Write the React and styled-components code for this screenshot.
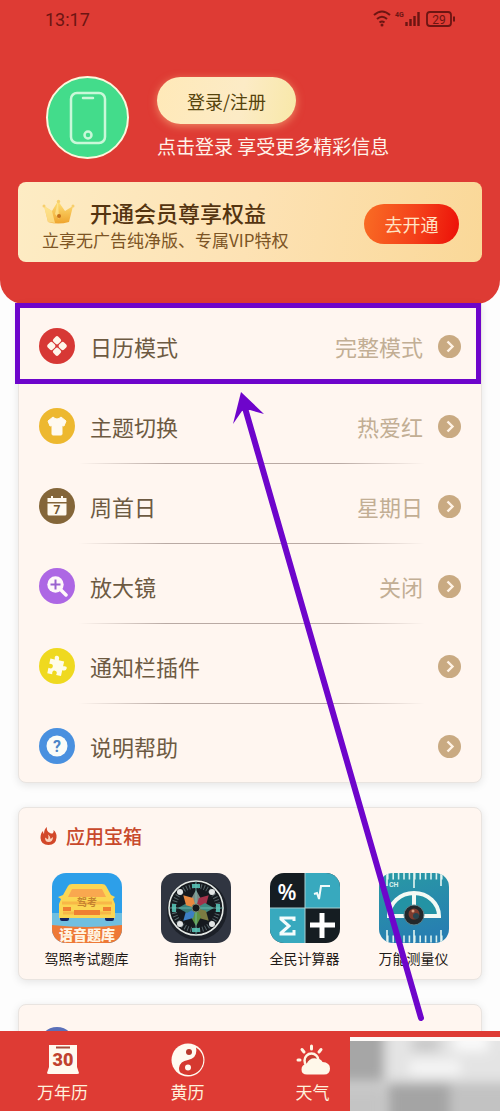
import React from 'react';
import styled, { createGlobalStyle } from 'styled-components';

const GlobalStyle = createGlobalStyle`
  * {
    box-sizing: border-box;
  }
  body {
    margin: 0;
    background: #fdfdfd;
    font-family: 'Noto Sans CJK SC', sans-serif;
  }
  button {
    border: 0;
    padding: 0;
    font-family: inherit;
    cursor: pointer;
  }
`;

const Page = styled.div`
  display: flex;
  flex-direction: column;
  height: 100vh;
  overflow: hidden;
`;

const Content = styled.main`
  position: relative;
  flex: 1;
  min-height: 0;
  overflow-y: auto;
  scrollbar-width: none;
`;

const Header = styled.header`
  height: 304px;
  padding: 0 18px;
  border-radius: 0 0 24px 24px;
  background: #de3b34;
`;

const StatusBar = styled.div`
  display: flex;
  align-items: center;
  justify-content: space-between;
  height: 38px;
  padding: 0 27px;
  color: #6d1512;
  font-family: Roboto, sans-serif;
  font-size: 18px;
`;

const Profile = styled.div`
  display: flex;
  gap: 28px;
  height: 144px;
  padding: 38px 0 0 28px;
`;

const Avatar = styled.div`
  display: grid;
  place-items: center;
  width: 83px;
  height: 83px;
  border: 2px solid #fdf6dc;
  border-radius: 50%;
  background: #43dc8b;
`;

const LoginButton = styled.button`
  display: block;
  width: 139px;
  height: 47px;
  margin: 1px 0 8px;
  border-radius: 24px;
  background: linear-gradient(100deg, #ffe9b8, #fcebc6 60%, #f8e8a8);
  box-shadow: 0 2px 8px rgba(255, 214, 150, 0.5);
  color: #55430c;
  font-size: 18px;
`;

const LoginHint = styled.div`
  color: #fff3ea;
  font-size: 19px;
  line-height: 28px;
`;

const VipCard = styled.section`
  display: flex;
  align-items: center;
  justify-content: space-between;
  height: 80px;
  padding: 0 23px 0 24px;
  border-radius: 8px;
  background: linear-gradient(100deg, #fdecc4, #fde2b4 50%, #fad898);
`;

const VipInfo = styled.div`
  padding-top: 6px;
`;

const VipTitle = styled.h2`
  display: flex;
  align-items: center;
  gap: 15px;
  margin: 0;
  color: #543410;
  font-size: 22px;
  font-weight: 500;
  line-height: 30px;
`;

const VipText = styled.p`
  margin: 0;
  color: #7c5424;
  font-size: 17px;
  line-height: 26px;
`;

const VipButton = styled.button`
  width: 95px;
  height: 40px;
  margin-top: 4px;
  border-radius: 20px;
  background: linear-gradient(100deg, #f96d24, #f4401a 55%, #ec0f08);
  color: #ffe3c4;
  font-size: 18px;
`;

const Card = styled.section`
  margin: 0 18px 24px;
  border: 1px solid #e9e4e0;
  border-radius: ${({ $flatTop }) => ($flatTop ? '0 0 8px 8px' : '8px')};
  background: #fff6f0;
  box-shadow: 0 2px 8px rgba(0, 0, 0, 0.1);
`;

const SettingList = styled.ul`
  margin: 0;
  padding: 13px 20px 8px;
  list-style: none;
`;

const SettingItem = styled.li`
  position: relative;
`;

const SettingButton = styled.button`
  display: flex;
  align-items: center;
  width: 100%;
  height: 56px;
  background: none;
  text-align: left;
`;

const SettingIcon = styled.span`
  display: grid;
  place-items: center;
  width: 36px;
  height: 36px;
  margin-right: 15px;
  border-radius: 50%;
  background: ${({ $color }) => $color};
`;

const SettingLabel = styled.span`
  flex: 1;
  color: #6d5a42;
  font-size: 22px;
`;

const SettingValue = styled.span`
  margin-right: 15px;
  color: #c2ae94;
  font-size: 22px;
`;

const Divider = styled.div`
  height: 1px;
  margin: 9px 36px 14px 40px;
  background: linear-gradient(90deg, transparent, #b9aaa4 25%, #b9aaa4 75%, transparent);
`;

const Highlight = styled.div`
  position: absolute;
  inset: -15px -20px 0 -24px;
  border: 5px solid #6e05cb;
  pointer-events: none;
`;

const Pointer = styled.svg`
  position: absolute;
  top: 388px;
  left: 230px;
  pointer-events: none;
`;

const ToolTitle = styled.h2`
  display: flex;
  align-items: center;
  gap: 8px;
  margin: 0;
  padding: 14px 20px 0;
  color: #c8492c;
  font-size: 19px;
  font-weight: 500;
  line-height: 28px;
`;

const ToolGrid = styled.div`
  display: grid;
  grid-template-columns: repeat(4, 1fr);
  padding: 23px 13px 10px;
`;

const Tool = styled.a`
  display: flex;
  flex-direction: column;
  align-items: center;
  gap: 4px;
  color: #1f1a17;
  font-size: 14px;
  line-height: 22px;
  text-decoration: none;
`;

const ToolSvg = styled.svg`
  display: block;
  border-radius: 14px;
`;

const MoreCard = styled(Card)`
  padding: 22px 20px;
`;

const MoreDot = styled.div`
  width: 36px;
  height: 36px;
  border-radius: 50%;
  background: #5a6fb8;
`;

const TabBar = styled.nav`
  position: relative;
  display: grid;
  grid-template-columns: repeat(4, 1fr);
  height: 80px;
  background: #de3b34;
`;

const Tab = styled.a`
  display: flex;
  flex-direction: column;
  align-items: center;
  gap: 2px;
  padding-top: 12px;
  color: #fff1dc;
  font-size: 17px;
  line-height: 26px;
  text-decoration: none;
`;

const Smudge = styled.svg`
  position: absolute;
  right: 0;
  bottom: 0;
  width: 30%;
  height: 74px;
`;

const StatusIcons = () => (
  <svg width="82" height="20" viewBox="0 0 82 20" fill="none" stroke="#6d1512">
    <path d="M1 6q8-7 16 0M4 10q5-4.500 10 0M6.500 13.500q2.500-2 5 0" strokeWidth="2" />
    <circle cx="9" cy="16" r="1.500" fill="#6d1512" stroke="none" />
    <text x="22" y="8" fill="#6d1512" stroke="none" fontFamily="Roboto" fontSize="7" fontWeight="700">4G</text>
    <path d="M33.500 17v-4M37.500 17v-7M41.500 17V7M45.500 17V3" strokeWidth="2.400" />
    <rect x="54" y="3" width="24" height="14" rx="3" strokeWidth="1.800" />
    <path d="M81 7.500v5" strokeWidth="2" />
    <text x="66" y="14.500" fill="#6d1512" stroke="none" fontFamily="Roboto" fontSize="12" textAnchor="middle">29</text>
  </svg>
);

const PhoneIcon = () => (
  <svg width="38" height="54" viewBox="0 0 38 54" fill="none" stroke="#c9f8d9" strokeWidth="2.500">
    <rect x="2" y="2" width="34" height="50" rx="6" />
    <path d="M14 7h10" strokeLinecap="round" />
    <circle cx="19" cy="44" r="3.500" />
  </svg>
);

const CrownIcon = () => (
  <svg width="33" height="26" viewBox="0 0 33 26">
    <defs>
      <linearGradient id="crown" x1="0" y1="0" x2="0" y2="1">
        <stop offset="0" stopColor="#ffe27a" />
        <stop offset="1" stopColor="#efa42d" />
      </linearGradient>
    </defs>
    <path d="M2 7l8 5 6-10 7 10 8-5-4 16q-11 3-21 0z" fill="url(#crown)" />
    <path d="M2 7l8 5 3 12-7-1zM16 2l-3 13 4 5z" fill="#ffe99b" opacity="0.7" />
    <circle cx="2" cy="7" r="1.500" fill="#f7cf6c" />
    <circle cx="31" cy="7" r="1.500" fill="#f7cf6c" />
    <circle cx="16.500" cy="2.500" r="1.700" fill="#f7cf6c" />
    <circle cx="17" cy="17" r="2" fill="#c4701b" />
  </svg>
);

const ArrowIcon = () => (
  <svg width="23" height="23" viewBox="0 0 23 23">
    <circle cx="11.500" cy="11.500" r="11.500" fill="#c9aa82" />
    <path d="M9.500 6.500l5 5-5 5" fill="none" stroke="#fff3e6" strokeWidth="2.400" />
  </svg>
);

const ModeIcon = () => (
  <svg width="22" height="22" viewBox="0 0 22 22" fill="#fff6ea">
    {[[11, 5.3], [5.3, 11], [16.7, 11], [11, 16.7]].map(([x, y]) => (
      <rect key={`${x}-${y}`} x={x - 3.5} y={y - 3.5} width="7" height="7" rx="2" transform={`rotate(45 ${x} ${y})`} />
    ))}
  </svg>
);

const ShirtIcon = () => (
  <svg width="22" height="22" viewBox="0 0 22 22" fill="#fffaf0">
    <path d="M7 2q4 4 8 0l5 4-2 5-2-.500V19q0 1-1 1H7q-1 0-1-1v-8.500L4 11 2 6z" stroke="#fffaf0" strokeLinejoin="round" />
  </svg>
);

const WeekIcon = () => (
  <svg width="22" height="22" viewBox="0 0 22 22">
    <path d="M1.500 3H5V1h2v2h8V1h2v2h3.500v4h-19zM1.500 8.500h19V19q0 1.500-1.500 1.500H3Q1.500 20.500 1.500 19z" fill="#fffaf0" />
    <text x="11" y="18.500" fill="#73582f" fontFamily="Roboto" fontSize="12" fontWeight="700" textAnchor="middle">7</text>
  </svg>
);

const MagnifierIcon = () => (
  <svg width="22" height="22" viewBox="0 0 22 22">
    <path d="M15 15l5 5" stroke="#fff8fa" strokeWidth="3.500" strokeLinecap="round" />
    <circle cx="9.500" cy="9.500" r="8.200" fill="#fff8fa" />
    <path d="M9.500 4.500v10M4.500 9.500h10" stroke="#9a62cf" strokeWidth="2" />
  </svg>
);

const PuzzleIcon = () => (
  <svg width="22" height="22" viewBox="0 0 22 22">
    <path
      d="M3 5h4.500Q6 1 9 1t2.500 4H17v5q4-1.500 4 1.500T17 14v6h-5q1-4-2-4t-2 4H3v-5.500q4 1 4-2t-4-2z"
      fill="#fffce8"
      transform="rotate(12 11 11)"
    />
  </svg>
);

const HelpIcon = () => (
  <svg width="22" height="22" viewBox="0 0 22 22">
    <circle cx="11" cy="11" r="10.500" fill="#fafcf8" />
    <text x="11" y="16.500" fill="#4a86c8" fontFamily="Roboto" fontSize="16" fontWeight="700" textAnchor="middle">?</text>
  </svg>
);

const FlameIcon = () => (
  <svg width="19" height="20" viewBox="0 0 19 20">
    <path d="M8 1q-1 4 3 6 2 1 3 0 1-1 .500-3Q18 7 17.500 11.500 17 19 9.500 19 2 19 1.500 12 1.500 7 4 5q0 2 1 3Q5 3 8 1z" fill="#d2482a" />
    <path d="M9 8.500q1 3 0 5L6 11.500q0 4.500 3.500 4.500 4.500 0 4.500-5l-2.500 2Q11.500 10 9 8.500z" fill="#fbd3bd" />
  </svg>
);

const CarTool = () => (
  <ToolSvg width="70" height="70" viewBox="0 0 70 70">
    <rect width="70" height="70" fill="#2d9fe9" />
    <path d="M0 40h70v20H0z" fill="#70bfe0" />
    <rect x="8" y="38" width="9" height="10" rx="2" fill="#15245e" />
    <rect x="53" y="38" width="9" height="10" rx="2" fill="#15245e" />
    <path d="M6 24l5-2 5-9q1-2 4-2h30q3 0 4 2l5 9 4 2-2 2 2 5v14H7V31l2-5z" fill="#fbd653" />
    <path d="M20 16h30l4 8H16z" fill="#f9a84f" />
    <path d="M10 30h50M11 40h48" stroke="#f8b847" strokeWidth="3" />
    <path d="M11 34h8v4h-8zM51 34h8v4h-8zM22 37h26v5H22z" fill="#ef7f31" />
    <text x="35" y="33" fill="#c5822f" fontSize="10" fontWeight="700" textAnchor="middle">驾考</text>
    <path d="M0 52q35 4 70 0v18H0z" fill="#ee7936" />
    <text x="35" y="67" fill="#fff5e4" fontSize="14" fontWeight="900" textAnchor="middle">语音题库</text>
  </ToolSvg>
);

const CompassTool = () => (
  <ToolSvg width="70" height="70" viewBox="0 0 70 70">
    <rect width="70" height="70" fill="#303541" />
    <circle cx="36" cy="37" r="30" fill="#1c2028" />
    <circle cx="35" cy="35" r="27" fill="#15191e" stroke="#e4e8e5" strokeWidth="1.600" />
    <circle cx="35" cy="35" r="22" fill="none" stroke="#56656a" strokeWidth="5" strokeDasharray="1 2" />
    {['#7c8c86', '#a3324a', '#3f8a80', '#7c7c42', '#5d9344', '#3d7fc4', '#3a7f7a', '#e8883f'].map((color, i) => (
      <path key={color} d="M35 35l-5-9 5-9 5 9z" fill={color} transform={`rotate(${i * 45} 35 35)`} />
    ))}
    {[[19, 19], [51, 19], [19, 51], [51, 51]].map(([x, y]) => (
      <circle key={`${x}-${y}`} cx={x} cy={y} r="3" fill="#e2e5e5" />
    ))}
    <path d="M31 13h8M31 57h8M13 31v8M57 31v8" stroke="#4fb1a6" strokeWidth="4" />
    <path d="M35 8v54M8 35h54" stroke="#79c9be" strokeWidth="0.700" />
    <circle cx="35" cy="35" r="4" fill="#14181b" stroke="#76856b" />
  </ToolSvg>
);

const CalculatorTool = () => (
  <ToolSvg width="70" height="70" viewBox="0 0 70 70">
    <rect width="70" height="70" fill="#151d22" />
    <path d="M35 0h35v35H35zM0 35h35v35H0z" fill="#38a9be" />
    <path d="M35 0v70M0 35h70" stroke="#a8cfd1" />
    <text x="17" y="27" fill="#fff" fontFamily="Open Sans" fontSize="22" fontWeight="600" textAnchor="middle">%</text>
    <path d="M44 21l3-1 2 6 2-13h9" fill="none" stroke="#f0fafa" strokeWidth="2" />
    <path d="M24 48v-3H11v1l8 7-8 7v1h13v-4" fill="none" stroke="#f4fcfc" strokeWidth="3" />
    <path d="M52 40v25M40 52h25" stroke="#fff" strokeWidth="5" />
  </ToolSvg>
);

const MeasureTool = () => (
  <ToolSvg width="70" height="70" viewBox="0 0 70 70">
    <defs>
      <linearGradient id="measure" x1="0" y1="0" x2="0.300" y2="1">
        <stop offset="0" stopColor="#299aa4" />
        <stop offset="1" stopColor="#277fb1" />
      </linearGradient>
    </defs>
    <rect width="70" height="70" fill="url(#measure)" />
    <path d="M8 3h56M8 66h56" stroke="#d8f1ef" strokeWidth="7" strokeDasharray="1.600 3.800" />
    <path d="M8 0v13M35 0v15M62 0v13M8 70V57M35 70V57M62 70V57" stroke="#e4f5f2" strokeWidth="1.600" />
    <text x="10" y="14" fill="#d5efec" fontFamily="Roboto" fontSize="7" fontWeight="700">CH</text>
    <path d="M10 43a25 23 0 0 1 50 0z" fill="#2393a4" stroke="#f3faf4" strokeWidth="4" />
    <path d="M35 20v12" stroke="#f3faf4" strokeWidth="4" />
    <circle cx="35" cy="42" r="10" fill="#23282b" stroke="#5a7f88" />
    <circle cx="35" cy="41" r="5.500" fill="#7e3c2f" />
    <circle cx="37" cy="43" r="3" fill="#284550" />
    <circle cx="34" cy="38" r="1.500" fill="#d99a7b" />
  </ToolSvg>
);

const CalendarTabIcon = () => (
  <svg width="34" height="34" viewBox="0 0 34 34">
    <path d="M3 2h28v22l2 6q0 1-2 1H3q-2 0-2-1l2-6z" fill="#fffaf0" />
    <path d="M10 4.500h14" stroke="#a54a3b" strokeWidth="2" />
    <text x="17" y="23" fill="#c0422f" fontFamily="Roboto" fontSize="18" fontWeight="900" textAnchor="middle">30</text>
  </svg>
);

const TaijiTabIcon = () => (
  <svg width="34" height="34" viewBox="0 0 34 34">
    <circle cx="17" cy="17" r="16.500" fill="#fffaf0" />
    <path d="M25 4.500A14.500 14.500 0 0 1 10 30q-2-1-2-5 1-7 9-8 10-2 8-12.500z" fill="#d5392f" />
    <circle cx="18" cy="9" r="3" fill="#b8392c" />
    <circle cx="17" cy="24.500" r="3" fill="#fffaf0" />
  </svg>
);

const WeatherTabIcon = () => (
  <svg width="34" height="34" viewBox="0 0 34 34">
    <path d="M15.500 3v3M6 6.500l2 2.500M25 6.500L23 9M2 17h2" stroke="#fff6e4" strokeWidth="3" strokeLinecap="round" />
    <circle cx="15.500" cy="17.500" r="7" fill="#c63e31" stroke="#fff6e4" strokeWidth="2.500" />
    <path d="M11 31.500q-5.500 0-5.500-5 0-5 5-5.500 3-6.500 9.500-5.500 5 0 6.500 3.500 7.500.500 7.500 6.500 0 6-6 6z" fill="#fff8ea" />
  </svg>
);

const settings = [
  { label: '日历模式', value: '完整模式', color: '#d73835', Icon: ModeIcon },
  { label: '主题切换', value: '热爱红', color: '#edb82f', Icon: ShirtIcon },
  { label: '周首日', value: '星期日', color: '#846639', Icon: WeekIcon },
  { label: '放大镜', value: '关闭', color: '#ad67e4', Icon: MagnifierIcon },
  { label: '通知栏插件', value: '', color: '#efd91f', Icon: PuzzleIcon },
  { label: '说明帮助', value: '', color: '#4990df', Icon: HelpIcon }
];

const tools = [
  { name: '驾照考试题库', Icon: CarTool },
  { name: '指南针', Icon: CompassTool },
  { name: '全民计算器', Icon: CalculatorTool },
  { name: '万能测量仪', Icon: MeasureTool }
];

const tabs = [
  { name: '万年历', Icon: CalendarTabIcon },
  { name: '黄历', Icon: TaijiTabIcon },
  { name: '天气', Icon: WeatherTabIcon }
];

const App = () => (
  <Page>
    <GlobalStyle />
    <Content>
      <Header>
        <StatusBar>
          <span>13:17</span>
          <StatusIcons />
        </StatusBar>
        <Profile>
          <Avatar>
            <PhoneIcon />
          </Avatar>
          <div>
            <LoginButton>登录/注册</LoginButton>
            <LoginHint>点击登录 享受更多精彩信息</LoginHint>
          </div>
        </Profile>
        <VipCard>
          <VipInfo>
            <VipTitle>
              <CrownIcon />
              开通会员尊享权益
            </VipTitle>
            <VipText>立享无广告纯净版、专属VIP特权</VipText>
          </VipInfo>
          <VipButton>去开通</VipButton>
        </VipCard>
      </Header>

      <Card $flatTop>
        <SettingList>
          {settings.map(({ label, value, color, Icon }, index) => (
            <SettingItem key={label}>
              <SettingButton>
                <SettingIcon $color={color}>
                  <Icon />
                </SettingIcon>
                <SettingLabel>{label}</SettingLabel>
                {value && <SettingValue>{value}</SettingValue>}
                <ArrowIcon />
              </SettingButton>
              {index < settings.length - 1 && <Divider />}
              {index === 0 && <Highlight />}
            </SettingItem>
          ))}
        </SettingList>
      </Card>

      <Card>
        <ToolTitle>
          <FlameIcon />
          应用宝箱
        </ToolTitle>
        <ToolGrid>
          {tools.map(({ name, Icon }) => (
            <Tool href="#" key={name}>
              <Icon />
              {name}
            </Tool>
          ))}
        </ToolGrid>
      </Card>

      <MoreCard>
        <MoreDot />
      </MoreCard>

      <Pointer width="200" height="636" viewBox="0 0 200 636">
        <path d="M15 20L191 630" stroke="#6e05cb" strokeWidth="6" strokeLinecap="round" />
        <path d="M11 4L3 36l9-13 8-1 14 4z" fill="#6e05cb" />
      </Pointer>
    </Content>

    <TabBar>
      {tabs.map(({ name, Icon }) => (
        <Tab href="#" key={name}>
          <Icon />
          {name}
        </Tab>
      ))}
      <Smudge viewBox="0 0 150 74" preserveAspectRatio="none">
        <defs>
          <filter id="soften" x="-20%" y="-20%" width="140%" height="140%">
            <feGaussianBlur stdDeviation="6" />
          </filter>
        </defs>
        <rect width="150" height="74" fill="#d4d4d4" />
        <g filter="url(#soften)">
          <path d="M-20-10h54v54h-54z" fill="#a6a6a6" />
          <path d="M36-10h134v54H36z" fill="#e4e4e4" />
          <path d="M62 0h28v14H62z" fill="#c6c6c6" />
          <path d="M60 24h50v14H60z" fill="#f6f6f6" />
          <path d="M104-6h34v20h-34z" fill="#fafafa" />
          <path d="M38 46h62v44H38z" fill="#a4a4a4" />
          <path d="M100 46h70v44h-70z" fill="#c2c2c2" />
          <path d="M-20 50h54v44h-54z" fill="#c4c4c4" />
        </g>
        <path d="M0 0h150v4H0z" fill="#fdf9f7" />
      </Smudge>
    </TabBar>
  </Page>
);

export default App;
